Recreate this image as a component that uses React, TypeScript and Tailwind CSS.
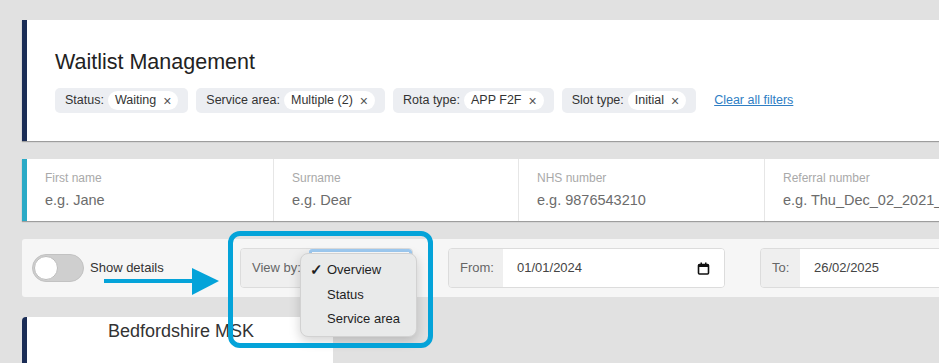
import React from "react";

const filters = [
  { label: "Status:", value: "Waiting" },
  { label: "Service area:", value: "Multiple (2)" },
  { label: "Rota type:", value: "APP F2F" },
  { label: "Slot type:", value: "Initial" },
];

const searchFields = [
  { label: "First name", placeholder: "e.g. Jane", w: "w-[246px]" },
  { label: "Surname", placeholder: "e.g. Dear", w: "w-[245px]" },
  { label: "NHS number", placeholder: "e.g. 9876543210", w: "w-[246px]" },
  { label: "Referral number", placeholder: "e.g. Thu_Dec_02_2021_", w: "w-[246px]" },
];

const CalendarIcon = () => (
  <svg width="13" height="13" viewBox="0 0 13 13" fill="none">
    <rect x="1.5" y="2.5" width="10" height="9.5" rx="1" stroke="#111" strokeWidth="1.6" />
    <rect x="1.5" y="2.5" width="10" height="2.5" fill="#111" />
    <rect x="3.5" y="0.5" width="1.5" height="2.5" fill="#111" />
    <rect x="8" y="0.5" width="1.5" height="2.5" fill="#111" />
  </svg>
);

const App = () => {
  return (
    <div
      className="relative w-[939px] h-[363px] overflow-hidden bg-[#e1e1e1] pl-[22px] pt-[20px]"
      style={{ fontFamily: '"Liberation Sans", Arial, sans-serif' }}
    >
      {/* header */}
      <div className="w-[940px] h-[121px] bg-white border-l-[5px] border-[#1b2d56] shadow-[0_1px_1px_rgba(0,0,0,0.3)] pl-[28px] pt-[30px]">
        <h1 className="text-[21.5px] leading-[25px] text-[#222]">Waitlist Management</h1>
        <div className="flex items-center gap-[8px] mt-[13px]">
          {filters.map((f) => (
            <div
              key={f.label}
              className="flex items-center h-[25px] bg-[#eceef2] rounded-[5px] pl-[10px] pr-[10px] text-[12.5px] text-[#333]"
            >
              <span>{f.label}</span>
              <span className="ml-[4px] flex items-center h-[19px] bg-white rounded-full pl-[7px] pr-[7px]">
                {f.value}
                <span className="ml-[7px] text-[14px] text-[#555] leading-none">×</span>
              </span>
            </div>
          ))}
          <a className="ml-[10px] text-[12.5px] text-[#2f7ec4] underline" href="#">
            Clear all filters
          </a>
        </div>
      </div>

      {/* search */}
      <div className="mt-[18px] w-[940px] h-[62px] flex bg-white border-l-[5px] border-[#2aaac6] shadow-[0_1px_1px_rgba(0,0,0,0.3)]">
        {searchFields.map((s, i) => (
          <div
            key={s.label}
            className={`${s.w} shrink-0 pl-[18px] pt-[12px] ${i > 0 ? "border-l border-[#e6e6e6]" : ""}`}
          >
            <div className="text-[12px] leading-[15px] text-[#a9a9a9]">{s.label}</div>
            <div className="mt-[6px] text-[14.5px] leading-[17px] text-[#6c6c6c] whitespace-nowrap">
              {s.placeholder}
            </div>
          </div>
        ))}
      </div>

      {/* toolbar */}
      <div className="mt-[18px] w-[940px] h-[58px] bg-[#f6f6f6] rounded-[3px] flex items-center pl-[10px]">
        <div className="w-[208px] shrink-0 flex items-center">
          <div className="w-[52px] h-[28px] rounded-full bg-[#cfcfcf] border border-[#c2c2c2] flex items-center pl-[1px]">
            <div className="w-[24px] h-[24px] rounded-full bg-white border border-[#bdbdbd]" />
          </div>
          <span className="ml-[6px] text-[13px] text-[#333]">Show details</span>
        </div>
        <div className="w-[173px] shrink-0 h-[40px] flex rounded-[4px] border border-[#dcdcdc] overflow-hidden">
          <div className="w-[68px] bg-[#efefef] flex items-center pl-[11px] text-[13px] text-[#666]">View by:</div>
          <div className="flex-1 bg-white border-[3px] border-[#9fcbf2] rounded-[3px]" />
        </div>
        <div className="ml-[35px] w-[277px] shrink-0 h-[40px] flex rounded-[4px] border border-[#dcdcdc] overflow-hidden">
          <div className="w-[54px] bg-[#efefef] flex items-center pl-[11px] text-[13px] text-[#666]">From:</div>
          <div className="flex-1 bg-white flex items-center justify-between pl-[14px] pr-[14px] text-[13px] text-[#444]">
            <span>01/01/2024</span>
            <CalendarIcon />
          </div>
        </div>
        <div className="ml-[35px] w-[277px] shrink-0 h-[40px] flex rounded-[4px] border border-[#dcdcdc] overflow-hidden">
          <div className="w-[39px] bg-[#efefef] flex items-center pl-[11px] text-[13px] text-[#666]">To:</div>
          <div className="flex-1 bg-white flex items-center pl-[14px] text-[13px] text-[#444]">
            <span>26/02/2025</span>
          </div>
        </div>
      </div>

      {/* card */}
      <div className="mt-[20px] w-[311px] h-[60px] bg-white border-l-[5px] border-[#1b2d56] rounded-tl-[4px] pt-[3px]">
        <div className="text-center text-[18px] leading-[22px] text-[#333] pl-[2px]">Bedfordshire MSK</div>
      </div>

      {/* dropdown menu */}
      <div className="absolute left-[300px] top-[253px] w-[117px] h-[84px] rounded-[8px] bg-[#e9eaea] border border-[#d2d2d2] shadow-[0_4px_12px_rgba(0,0,0,0.18)] pt-[4px] text-[13px] font-medium text-[#1f1f1f]">
        <div className="h-[24px] flex items-center">
          <span className="w-[26px] text-right pr-[4px] text-[15px] font-bold">✓</span>
          <span>Overview</span>
        </div>
        <div className="h-[25px] flex items-center pl-[26px]">Status</div>
        <div className="h-[24px] flex items-center pl-[26px]">Service area</div>
      </div>

      {/* highlight box */}
      <div className="absolute left-[228px] top-[231px] w-[205px] h-[117px] rounded-[12px] border-[5px] border-[#04a3d9]" />

      {/* arrow */}
      <svg className="absolute left-[104px] top-[266px]" width="116" height="31" viewBox="0 0 116 31">
        <rect x="0" y="13" width="90" height="4" fill="#04a3d9" />
        <polygon points="88,2 115,15 88,29" fill="#04a3d9" />
      </svg>
    </div>
  );
};

export default App;
